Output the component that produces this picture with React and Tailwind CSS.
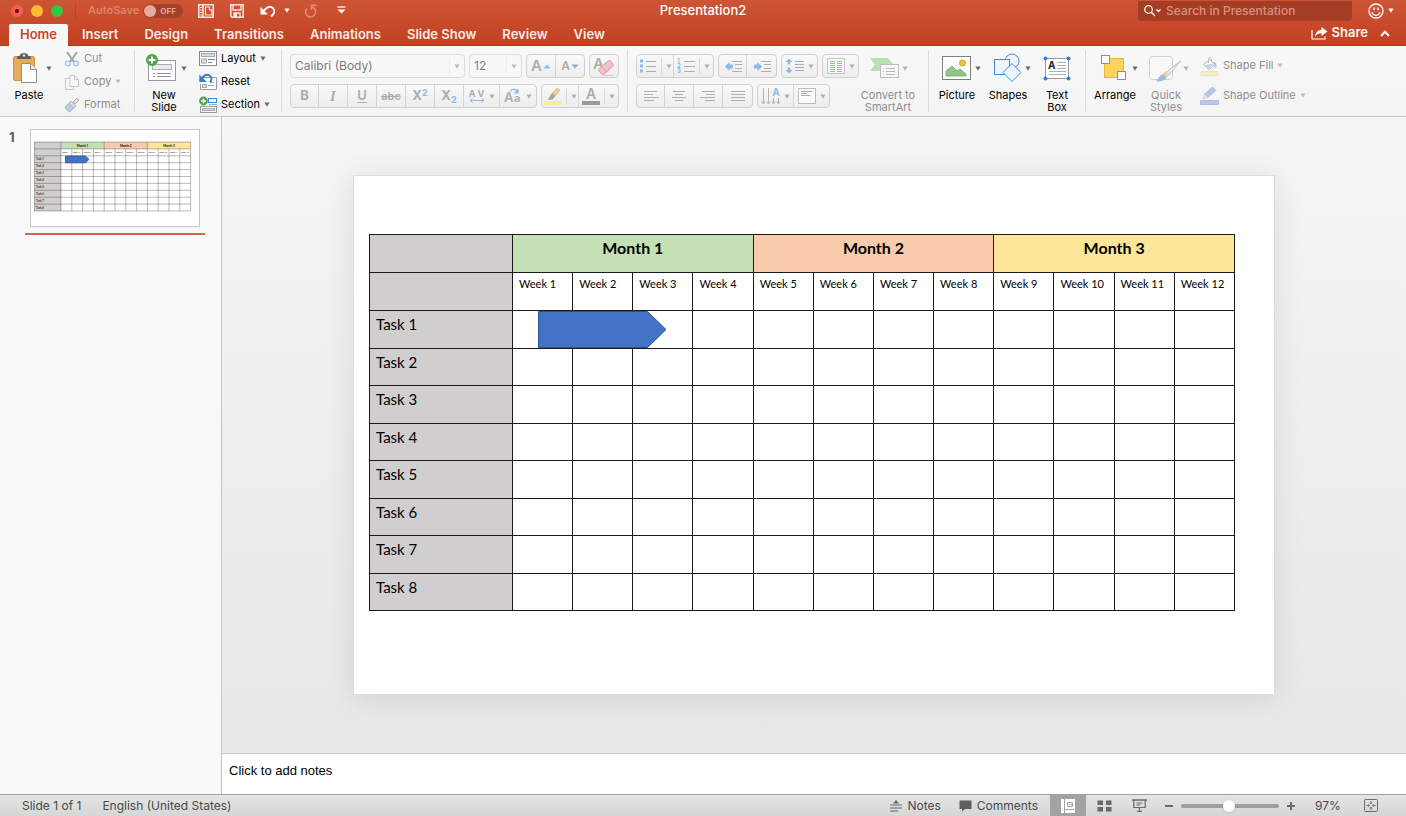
import { useState } from "react";

const tabs = ["Home", "Insert", "Design", "Transitions", "Animations", "Slide Show", "Review", "View"];

const months = [
  { name: "Month 1", cell: "bg-[#c5e0b4]", fill: "#c5e0b4" },
  { name: "Month 2", cell: "bg-[#f8cbad]", fill: "#f8cbad" },
  { name: "Month 3", cell: "bg-[#fde699]", fill: "#fde699" },
];
const weeks = Array.from({ length: 12 }, (_, i) => i + 1);
const tasks = Array.from({ length: 8 }, (_, i) => i + 1);

const Caret = ({ className = "text-[#6b6b6b]" }) => (
  <svg viewBox="0 0 6 5" className={`h-[5px] w-[6px] shrink-0 ${className}`} fill="currentColor" aria-hidden="true">
    <path d="M.4.4h5.2L3 4.8z" />
  </svg>
);

// small svg wrapper, lines are thin grey strokes unless told otherwise
const Svg = ({ w, h, className = "", children }) => (
  <svg width={w} height={h} viewBox={`0 0 ${w} ${h}`} className={`shrink-0 overflow-visible ${className}`} fill="none" stroke="#8a8a8a" aria-hidden="true">
    {children}
  </svg>
);

const Lines = ({ d, color = "#adadad" }) => <path d={d} stroke={color} strokeWidth="1" />;

const BigButton = ({ icon, label, width, caret = true, caretInside, disabled }) => {
  const arrow = <Caret className={disabled ? "text-[#b4b4b4]" : "text-[#6b6b6b]"} />;

  return (
    <button className={`flex items-start pt-1 text-[11px] leading-3 ${disabled ? "text-[#8e8e8e]" : "text-black"}`} disabled={disabled}>
      <span className={`flex flex-col items-center ${width}`}>
        <span className="flex h-9 items-center justify-center">
          {icon}
          {caretInside && arrow}
        </span>
        <span className="pt-[3px] text-center whitespace-pre">{label}</span>
      </span>
      {caret && !caretInside && <span className="flex h-9 items-center">{arrow}</span>}
    </button>
  );
};

const SmallButton = ({ icon, label, caret, disabled }) => (
  <button className={`flex h-[23px] items-center gap-1 text-[11px] ${disabled ? "text-[#8e8e8e]" : "text-black"}`} disabled={disabled}>
    {icon}
    <span>{label}</span>
    {caret && <Caret className={disabled ? "text-[#c0c0c0]" : "text-[#6b6b6b]"} />}
  </button>
);

const ToolBox = ({ children }) => (
  <div className="flex h-6 divide-x divide-[#d4d4d4] rounded border border-[#d0d0d0] bg-linear-to-b from-[#f9f9f9] to-[#ededed]">
    {children}
  </div>
);

const Tool = ({ label, width = "w-[29px]", caret, split, children }) => (
  <button aria-label={label} className={`flex items-center justify-center gap-1 text-[#adadad] ${width}`} disabled>
    {children}
    {split && <span className="h-4 w-px bg-[#d8d8d8]" />}
    {caret && <Caret className="text-[#b0b0b0]" />}
  </button>
);

const Divider = () => <div className="mx-2 h-[62px] w-px shrink-0 self-center bg-[#dcdcdc]" />;

const TitleBar = () => (
  <div className="flex h-[21px] items-center text-white">
    <div className="flex flex-1 items-center">
      <div className="flex gap-2 pl-[11px]">
        <button aria-label="Close" className="flex h-3 w-3 items-center justify-center rounded-full bg-[#fc5b53]">
          <span className="h-1 w-1 rounded-full bg-[#5a0a05]" />
        </button>
        <button aria-label="Minimize" className="h-3 w-3 rounded-full bg-[#fdbc2e]" />
        <button aria-label="Zoom" className="h-3 w-3 rounded-full bg-[#34c63f]" />
      </div>
      <span className="ml-3 h-4 w-px bg-[#b8472a]" />
      <label className="ml-3 flex items-center gap-1 text-[11px] font-semibold text-[#e0826a]">
        AutoSave
        <span className="flex h-[14px] w-10 items-center gap-1 rounded-full bg-[#a34129] px-px text-[8px] font-bold text-[#e5a191]">
          <input type="checkbox" className="h-3 w-3 appearance-none rounded-full bg-[#e8aa9c]" />
          OFF
        </span>
      </label>
      <div className="ml-[15px] flex items-center">
        <button aria-label="Templates">
          <Svg w={16} h={14}>
            <path d="M.8.8h14.4v12.4H.8zM5 1v12" stroke="#fbe9e4" strokeWidth="1.5" />
            <path d="M2 3.5h2M2 6h2M2 8.5h2M2 11h2" stroke="#fbe9e4" />
            <path d="M7.500 3h4v3H14v5H7.500z" stroke="#fbe9e4" strokeWidth="1.200" />
          </Svg>
        </button>
        <button aria-label="Save" className="ml-4">
          <Svg w={14} h={14}>
            <path d="M.8.8h12.400v12.400H2L.8 12z" stroke="#fbe9e4" strokeWidth="1.500" />
            <path d="M3 1v5h8V1M4 13.500V9h6v4.500" stroke="#fbe9e4" strokeWidth="1.300" />
            <path d="M4 9h3v4H4z" fill="#fbe9e4" stroke="none" />
          </Svg>
        </button>
        <button aria-label="Undo" className="ml-4">
          <Svg w={16} h={14}>
            <path d="M2 8.500 5.500 5C8 2.500 11 2.200 13 4.200s1.500 4.800-.5 6.800L11 12.500" stroke="#fff" strokeWidth="1.900" />
            <path d="M.5 3v7.500H8z" fill="#fff" stroke="none" />
          </Svg>
        </button>
        <Caret className="ml-2 text-white" />
        <button aria-label="Redo" className="ml-[14px]">
          <Svg w={13} h={14}>
            <path d="M2.800 4.500A5 5 0 1 0 10.500 4.700L8 2" stroke="#e08a74" strokeWidth="1.700" />
            <path d="M12.500 1.200H7.500V6" stroke="#e08a74" strokeWidth="1.600" />
          </Svg>
        </button>
        <button aria-label="Customize toolbar" className="ml-5">
          <Svg w={9} h={9}>
            <path d="M.5 1h8" stroke="#fff" strokeWidth="1.300" />
            <path d="M.5 3.500h8l-4 4z" fill="#fff" stroke="none" />
          </Svg>
        </button>
      </div>
    </div>
    <h1 className="text-[13px] font-medium">Presentation2</h1>
    <div className="flex flex-1 items-center justify-end">
      <label className="flex h-5 w-[214px] items-center self-start rounded-b bg-[#a53d24] pl-[6px]">
        <Svg w={18} h={12}>
          <circle cx="4.500" cy="4.500" r="3.800" stroke="#fff" strokeWidth="1.200" />
          <path d="m7.300 7.300 3.700 3.700" stroke="#fff" strokeWidth="1.300" />
          <path d="m12.500 4.500 2 2 2-2" stroke="#fff" strokeWidth="1.300" />
        </Svg>
        <input
          type="search"
          aria-label="Search in Presentation"
          placeholder="Search in Presentation"
          className="ml-1 min-w-0 flex-1 bg-transparent text-[12px] font-medium outline-none placeholder:text-[#dc907c]"
        />
      </label>
      <button aria-label="Feedback" className="mr-3 ml-4 flex items-center gap-1">
        <Svg w={16} h={16}>
          <circle cx="8" cy="8" r="7" stroke="#fff" strokeWidth="1.300" />
          <path d="M6 4.500v2.700M10 4.500v2.700" stroke="#fff" strokeWidth="1.500" />
          <path d="M4 9c.6 2.200 2 3.300 4 3.300S11.400 11.200 12 9" stroke="#fff" strokeWidth="1.200" />
        </Svg>
        <Caret className="text-white" />
      </button>
    </div>
  </div>
);

const Tabs = ({ active, onSelect }) => (
  <div className="flex h-6 items-end pr-4 pl-[9px]">
    <nav className="-mb-px flex">
      {tabs.map((tab) => (
        <button
          key={tab}
          onClick={() => onSelect(tab)}
          className={`h-[22px] rounded-t-xs text-[13px] font-semibold ${
            active === tab ? "mr-px bg-[#f8f8f8] px-[11px] text-[#c9472a]" : "px-[13px] text-[#fbe9e4]"
          }`}
        >
          {tab}
        </button>
      ))}
    </nav>
    <div className="ml-auto flex h-6 items-center text-[13px] font-semibold text-[#fdf0ec]">
      <button className="flex items-center gap-1">
        <Svg w={17} h={14}>
          <path d="M1 4v9h13v-2.500" stroke="#fff" strokeWidth="1.200" />
          <path d="M10.500 1 16.500 5.500l-6 4.500V7.300C7.500 7.300 5.500 8.300 4 11c.3-4 2.500-7 6.500-7.300z" fill="#fff" stroke="none" />
        </Svg>
        Share
      </button>
      <button aria-label="Collapse ribbon" className="ml-3">
        <Svg w={10} h={7}>
          <path d="m1 6 4-4.200L9 6" stroke="#fff" strokeWidth="2" />
        </Svg>
      </button>
    </div>
  </div>
);

const ClipboardGroup = () => (
  <div className="flex items-start">
    <BigButton
      width="w-[34px]"
      label="Paste"
      icon={
        <Svg w={34} h={32}>
          <rect x="1.500" y="4.500" width="21" height="24" rx="1.500" fill="#e2ab5f" stroke="#cf9445" />
          <path d="M5 7V5.500C5 4.500 6 4 7.500 4 8 2 10 1 12 1s4 1 4.500 3c1.500 0 2.500.5 2.500 1.500V7z" fill="#5f5f5f" stroke="none" />
          <circle cx="12" cy="3.500" r="1.200" fill="#e8e8e8" stroke="none" />
          <path d="M9.500 11.500h9l6 6v13h-15z" fill="#fff" stroke="#8f8f8f" />
          <path d="M18.500 11.500v6h6" fill="#f1f1f1" />
        </Svg>
      }
    />
    <div className="ml-3 flex flex-col pt-px">
      <SmallButton
        disabled
        label="Cut"
        icon={
          <Svg w={16} h={16}>
            <path d="M3 1l7 10M13 1 6 11" stroke="#a3a3a3" strokeWidth="2" />
            <circle cx="3.800" cy="12.500" r="2.400" stroke="#9dbfe6" strokeWidth="1.200" />
            <circle cx="12" cy="12.500" r="2.400" stroke="#9dbfe6" strokeWidth="1.200" />
          </Svg>
        }
      />
      <SmallButton
        disabled
        caret
        label="Copy"
        icon={
          <Svg w={16} h={16}>
            <path d="M6 4.500H1.500v11h8V12" stroke="#c6c6c6" />
            <path d="M6 1.500h4.500l4 4v7H6z" fill="#fafafa" stroke="#c6c6c6" />
            <path d="M10.500 1.500v4h4" stroke="#c6c6c6" />
          </Svg>
        }
      />
      <SmallButton
        disabled
        label="Format"
        icon={
          <Svg w={16} h={16}>
            <path d="m1 10 4-4 5 5-4 4c-1-.2-2-.8-2.700-1.500C2.300 12.500 1.300 11 1 10z" fill="#b8cce6" stroke="#a8bbd4" />
            <path d="m5 6 2-2 5 5-2 2z" fill="#dedede" stroke="#b5b5b5" />
            <path d="m9 5 4-4 2 2-4 4z" fill="#dedede" stroke="#b5b5b5" />
          </Svg>
        }
      />
    </div>
  </div>
);

const SlidesGroup = () => (
  <div className="flex items-start pl-1">
    <BigButton
      width="w-[34px]"
      label={"New\nSlide"}
      icon={
        <Svg w={34} h={32}>
          <rect x="1.500" y="8.500" width="27" height="20" fill="#fff" stroke="#9a9a9a" />
          <rect x="5.500" y="12.500" width="19" height="5" fill="#e9ebef" stroke="#a9adb5" />
          <path d="M6 21.500h2M10 21.500h14M6 24.500h2M10 24.500h14" stroke="#8c919c" />
          <circle cx="5" cy="8" r="6" fill="#4fa64a" stroke="none" />
          <path d="M5 4.500v7M1.500 8h7" stroke="#fff" strokeWidth="2" />
        </Svg>
      }
    />
    <div className="ml-3 flex flex-col pt-px">
      <SmallButton
        caret
        label="Layout"
        icon={
          <Svg w={18} h={15}>
            <rect x=".5" y=".5" width="17" height="14" fill="#fff" stroke="#8a8a8a" />
            <rect x="2.500" y="2.500" width="13" height="3" fill="#d9dce1" stroke="#a5a9b0" />
            <rect x="2.500" y="8" width="5" height="4" fill="#d9dce1" stroke="#a5a9b0" />
            <path d="M9 8.500h7M9 11.500h4" />
          </Svg>
        }
      />
      <SmallButton
        label="Reset"
        icon={
          <Svg w={18} h={17}>
            <path d="M5 4.500h12.500v12h-16V11" fill="#fff" stroke="#9a9a9a" />
            <rect x="3.500" y="11.500" width="4" height="3" fill="#d9dce1" stroke="#a5a9b0" />
            <path d="M9 12.500h6M12 9.500h3" stroke="#a5a9b0" />
            <path d="M3 5.500C5 2.500 8 1 10.500 2.500s2.500 4.500.5 7" stroke="#2f7fd8" strokeWidth="2" />
            <path d="M.3 1.500v7.500h7.500z" fill="#2f7fd8" stroke="none" />
          </Svg>
        }
      />
      <SmallButton
        caret
        label="Section"
        icon={
          <Svg w={18} h={17}>
            <rect x="9.500" y="2.500" width="8" height="4" fill="#fff" stroke="#3f86d4" />
            <rect x="1.500" y="10.500" width="16" height="6" fill="#fff" stroke="#9a9a9a" />
            <rect x="3.500" y="12.500" width="12" height="2" fill="#d9dce1" stroke="#a5a9b0" />
            <path d="M10 8.500h8" stroke="#8ab1dc" />
            <circle cx="4.500" cy="5" r="4.400" fill="#4fa64a" stroke="none" />
            <path d="M4.500 2.500v5M2 5h5" stroke="#fff" strokeWidth="1.500" />
          </Svg>
        }
      />
    </div>
  </div>
);

const Picker = ({ label, value, width }) => (
  <div className={`flex h-6 items-center rounded border border-[#dcdcdc] bg-[#f8f8f8] ${width}`}>
    <select aria-label={label} className="h-full min-w-0 flex-1 appearance-none bg-transparent pl-1 text-[12px] text-[#7c7c7c] outline-none">
      <option>{value}</option>
    </select>
    <span className="h-4 w-px bg-[#ececec]" />
    <Caret className="mx-1 text-[#b9b9b9]" />
  </div>
);

const FontGroup = () => (
  <div className="flex flex-col gap-[6px] pt-2">
    <div className="flex gap-1">
      <Picker label="Font" value="Calibri (Body)" width="w-[175px]" />
      <Picker label="Font size" value="12" width="w-[53px]" />
      <ToolBox>
        <Tool label="Increase font size">
          <span className="flex items-center gap-px">
            <span className="text-[15px] font-semibold">A</span>
            <Svg w={8} h={5}><path d="m.5 4.500 3.500-4 3.500 4z" fill="#8fb9ea" stroke="none" /></Svg>
          </span>
        </Tool>
        <Tool label="Decrease font size" width="w-7">
          <span className="flex items-center gap-px">
            <span className="text-[12px] font-semibold">A</span>
            <Svg w={8} h={5}><path d="m.5.5 3.500 4 3.500-4z" fill="#8fa9da" stroke="none" /></Svg>
          </span>
        </Tool>
      </ToolBox>
      <ToolBox>
        <Tool label="Clear formatting" width="w-7">
          <Svg w={22} h={20}>
            <text x="0" y="13" fontSize="15" fontWeight="600" fill="#adadad" stroke="none">A</text>
            <rect x="5.500" y="8" width="15" height="7" rx="1.500" transform="rotate(-42 13 11.500)" fill="#f0c4c8" stroke="#dba2a8" />
            <path d="m8.500 10.500 5 5.300" stroke="#dba2a8" />
            <path d="M11 19.500h9" stroke="#cfcfcf" />
          </Svg>
        </Tool>
      </ToolBox>
    </div>
    <div className="flex gap-1">
      <ToolBox>
        <Tool label="Bold" width="w-[28px]"><b className="text-[13px]">B</b></Tool>
        <Tool label="Italic"><i className="font-['Liberation_Serif',serif] text-[15px] font-bold">I</i></Tool>
        <Tool label="Underline"><span className="text-[13px] font-semibold underline underline-offset-2">U</span></Tool>
        <Tool label="Strikethrough"><span className="text-[11px] font-semibold line-through">abc</span></Tool>
        <Tool label="Superscript">
          <span className="text-[13px] font-bold">X<sup className="text-[9px] text-[#8fb9ea]">2</sup></span>
        </Tool>
        <Tool label="Subscript">
          <span className="text-[13px] font-bold">X<sub className="text-[9px] text-[#8fb9ea]">2</sub></span>
        </Tool>
        <Tool label="Character spacing" width="w-9" caret>
          <span className="flex flex-col items-center text-[9px] leading-[9px] font-bold">
            A V
            <Svg w={16} h={5}>
              <path d="M1 2.500h14M3.500.5l-2.500 2 2.500 2M12.500.5l2.500 2-2.500 2" stroke="#8fb9ea" />
            </Svg>
          </span>
        </Tool>
        <Tool label="Change case" width="w-9" caret>
          <Svg w={18} h={16}>
            <text x="0" y="14" fontSize="13" fontWeight="600" fill="#adadad" stroke="none">A</text>
            <text x="10" y="14" fontSize="11" fontWeight="600" fill="#adadad" stroke="none">a</text>
            <path d="M6.500 3.500c1-2.500 4.500-3 6.500-.5" stroke="#8fb9ea" strokeWidth="1.500" />
            <path d="M14.500.5v5h-5z" fill="#8fb9ea" stroke="none" />
          </Svg>
        </Tool>
      </ToolBox>
      <ToolBox>
        <Tool label="Highlight" width="w-[37px]" caret split>
          <Svg w={18} h={18}>
            <path d="m8 6 5-5 3 2-4.500 6z" fill="#f0cf96" stroke="#dcb980" strokeWidth=".7" />
            <path d="m8 6 3.500 3-3 3.500-5 .5z" fill="#a5a5a5" stroke="none" />
            <path d="M0 14h18v4H0z" fill="#f0f0a0" stroke="none" />
          </Svg>
        </Tool>
        <Tool label="Font color" width="w-[39px]" caret split>
          <Svg w={18} h={18}>
            <text x="9" y="11.500" fontSize="14" fontWeight="600" textAnchor="middle" fill="#adadad" stroke="none">A</text>
            <path d="M0 14h18v4H0z" fill="#9a9a9a" stroke="none" />
          </Svg>
        </Tool>
      </ToolBox>
    </div>
  </div>
);

const ParagraphGroup = () => (
  <div className="flex items-start">
    <div className="flex flex-col gap-[6px] pt-2">
      <div className="flex gap-1">
        <ToolBox>
          <Tool label="Bullets" width="w-[37px]" caret split>
            <Svg w={18} h={14}>
              <path d="M1 2h3M1 7h3M1 12h3" stroke="#8fb9ea" strokeWidth="3" />
              <Lines d="M7 2.500h10M7 7.500h10M7 12.500h10" />
            </Svg>
          </Tool>
          <Tool label="Numbering" width="w-[39px]" caret split>
            <Svg w={18} h={16}>
              <g fill="#8fb9ea" stroke="none" fontSize="6" fontWeight="700">
                <text x="0" y="5">1</text>
                <text x="0" y="10">2</text>
                <text x="0" y="15">3</text>
              </g>
              <Lines d="M7 3.500h11M7 8.500h11M7 13.500h11" />
            </Svg>
          </Tool>
        </ToolBox>
        <ToolBox>
          <Tool label="Decrease indent" width="w-[28px]">
            <Svg w={18} h={14}>
              <path d="M1 7.500 5.500 3v2.500H9v4H5.500V12z" fill="#8fb9ea" stroke="none" />
              <Lines d="M8 2.500h10M11 5.500h7M11 9.500h7M8 12.500h10" />
            </Svg>
          </Tool>
          <Tool label="Increase indent" width="w-[29px]">
            <Svg w={18} h={14}>
              <path d="M9 7.500 4.500 3v2.500H1v4h3.500V12z" fill="#8fb9ea" stroke="none" />
              <Lines d="M8 2.500h10M11 5.500h7M11 9.500h7M8 12.500h10" />
            </Svg>
          </Tool>
        </ToolBox>
        <ToolBox>
          <Tool label="Line spacing" width="w-[35px]" caret>
            <Svg w={19} h={16}>
              <path d="M4 .5 7.500 4H5.200v2.500H2.800V4H.5zM4 15.500 7.500 12H5.200V9.500H2.800V12H.5z" fill="#8fb9ea" stroke="none" />
              <Lines d="M10 3.500h9M10 6.500h9M10 9.500h9M10 12.500h9" />
            </Svg>
          </Tool>
        </ToolBox>
        <ToolBox>
          <Tool label="Columns" width="w-[35px]" caret>
            <Svg w={18} h={16}>
              <rect x=".5" y=".5" width="17" height="15" fill="#fafafa" stroke="#c4c4c4" />
              <Lines color="#8ccb85" d="M3 3.500h5M3 5.500h5M3 7.500h5M3 9.500h5M3 11.500h5M3 13.500h5M10 3.500h5M10 5.500h5M10 7.500h5M10 9.500h5M10 11.500h5M10 13.500h5" />
            </Svg>
          </Tool>
        </ToolBox>
      </div>
      <div className="flex gap-1">
        <ToolBox>
          <Tool label="Align left" width="w-[28px]"><Svg w={16} h={12}><Lines d="M1 1.500h13M1 4.500h9M1 7.500h15M1 10.500h10" /></Svg></Tool>
          <Tool label="Align center"><Svg w={16} h={12}><Lines d="M2 1.500h12M4 4.500h8M1 7.500h14M4 10.500h8" /></Svg></Tool>
          <Tool label="Align right"><Svg w={16} h={12}><Lines d="M2 1.500h13M6 4.500h9M0 7.500h15M5 10.500h10" /></Svg></Tool>
          <Tool label="Justify"><Svg w={16} h={12}><Lines d="M1 1.500h14M1 4.500h14M1 7.500h14M1 10.500h14" /></Svg></Tool>
        </ToolBox>
        <ToolBox>
          <Tool label="Text direction" width="w-[36px]" caret>
            <Svg w={18} h={17}>
              <path d="M1.500 0v15M6.500 0v15M11.500 10v5M16.500 10v5M0 13.500 1.500 16 3 13.500M5 13.500 6.500 16 8 13.500M10 13.500l1.500 2.500 1.500-2.500M15 13.500l1.500 2.500 1.500-2.500" stroke="#b4b4b4" />
              <text x="14" y="8" fontSize="10" fontWeight="700" textAnchor="middle" fill="#8fb9ea" stroke="none">A</text>
            </Svg>
          </Tool>
          <Tool label="Align text" width="w-[35px]" caret>
            <Svg w={18} h={16}>
              <rect x=".5" y=".5" width="17" height="15" fill="#fafafa" stroke="#bdbdbd" />
              <Lines d="M3 3.500h11M3 5.500h6M3 7.500h9" />
            </Svg>
          </Tool>
        </ToolBox>
      </div>
    </div>
    <BigButton
      disabled
      caretInside
      width="w-[58px]"
      label={"Convert to\nSmartArt"}
      icon={
        <Svg w={34} h={32}>
          <path d="M2 6h18l6 7-5 6H2l5-6.500z" fill="#bcdfba" stroke="none" />
          <rect x="12.500" y="12.500" width="18" height="13" fill="#fafafa" stroke="#bdbdbd" />
          <Lines d="M15 16.500h1M18 16.500h9M15 19.500h1M18 19.500h9M15 22.500h1M18 22.500h9" color="#b5b5b5" />
        </Svg>
      }
    />
  </div>
);

const InsertGroup = () => (
  <div className="flex items-start gap-[10px] pr-1 pl-[2px]">
    <BigButton
      width="w-9"
      label="Picture"
      icon={
        <Svg w={30} h={26}>
          <rect x=".5" y="1.500" width="28" height="23" fill="#fff" stroke="#7f7f7f" />
          <path d="M4 21v-5l6-5 5 5 3-2 6 5v2z" fill="#94c48e" stroke="#7db577" />
          <circle cx="20.500" cy="8" r="3" fill="#f5bf3a" stroke="#e0a526" />
        </Svg>
      }
    />
    <BigButton
      width="w-[34px]"
      label="Shapes"
      icon={
        <Svg w={30} h={30}>
          <circle cx="19" cy="8" r="7" fill="#eef5fd" stroke="#3d8ae0" />
          <rect x="1.500" y="6.500" width="15" height="15" fill="#eef5fd" stroke="#3d8ae0" />
          <path d="m19 10.500 9 9-9 9-9-9z" fill="#eef5fd" stroke="#3d8ae0" />
        </Svg>
      }
    />
    <BigButton
      width="w-8"
      label={"Text\nBox"}
      caret={false}
      icon={
        <Svg w={28} h={26}>
          <rect x="2.500" y="3.500" width="23" height="20" fill="#fff" stroke="#9a9a9a" />
          <text x="5" y="14" fontSize="10" fontWeight="700" fill="#222" stroke="none">A</text>
          <path d="M14 7.500h9M14 10.500h9M14 13.500h9M6 16.500h17M6 19.500h17" stroke="#b0b0b0" />
          <g fill="#2f7fd8" stroke="none">
            <circle cx="2.500" cy="3.500" r="2" />
            <circle cx="25.500" cy="3.500" r="2" />
            <circle cx="2.500" cy="23.500" r="2" />
            <circle cx="25.500" cy="23.500" r="2" />
          </g>
        </Svg>
      }
    />
  </div>
);

const DrawingGroup = () => (
  <div className="flex items-start gap-[11px] pl-1">
    <BigButton
      width="w-[34px]"
      label="Arrange"
      icon={
        <Svg w={28} h={28}>
          <rect x="3.500" y="4.500" width="19" height="19" fill="#fcd456" stroke="#e8b935" />
          <rect x=".5" y="1.500" width="8" height="8" fill="#fff" stroke="#8f8f8f" />
          <rect x="16.500" y="17.500" width="8" height="8" fill="#fff" stroke="#8f8f8f" />
        </Svg>
      }
    />
    <BigButton
      disabled
      width="w-[34px]"
      label={"Quick\nStyles"}
      icon={
        <Svg w={34} h={28}>
          <rect x=".5" y="2.500" width="23" height="23" rx="3" fill="#f9f9f9" stroke="#cfcfcf" />
          <path d="M31.500 7 20 21l-3-2.500z" fill="#ededed" stroke="#bdbdbd" />
          <path d="m16 17 4 4-3 3-3.500-3z" fill="#f2d3a8" stroke="none" />
          <path d="M13.500 20.500c2 0 4 2 4 3.500-2 3-7 4-10.500 3 2.500-1 2.500-5.500 6.500-6.500z" fill="#9dbbe3" stroke="none" />
        </Svg>
      }
    />
    <div className="flex flex-col gap-[7px] pt-2">
      <SmallButton
        disabled
        caret
        label="Shape Fill"
        icon={
          <Svg w={19} h={20}>
            <path d="M1 15.500h17v4H1z" fill="#f7eecb" stroke="#efe3b4" />
            <path d="m3.500 8.500 6-5 5.500 5-6 5z" fill="#fafafa" stroke="#b9b9b9" />
            <path d="M8.500 7V3c0-2 3-2 3 0v3" stroke="#b9b9b9" />
            <path d="m5 9 9-1.500L9 13z" fill="#bcd6ef" stroke="none" />
            <path d="M13.500 5.500c3 .5 3.500 3.500 2.500 7-1.500-1-1.500-3-2.500-4.500z" fill="#a9cbec" stroke="none" />
          </Svg>
        }
      />
      <SmallButton
        disabled
        caret
        label="Shape Outline"
        icon={
          <Svg w={19} h={20}>
            <path d="M.5 14.500h18v4H.5z" fill="#b9cae6" stroke="#abc0e0" />
            <path d="m3 12.500 1.500-4.500 8-7 3.500 3.500-8 7z" fill="#b2c8e6" stroke="#a8bcd8" strokeWidth=".7" />
            <path d="M3 12.500 4.500 8l3.500 3.500z" fill="#e3e3e3" stroke="none" />
          </Svg>
        }
      />
    </div>
  </div>
);

const Ribbon = () => (
  <div className="flex h-[72px] shrink-0 items-start overflow-hidden border-t border-b border-t-[#a9381c] border-b-[#c8c8c8] bg-linear-to-b from-[#f8f8f8] to-[#f4f4f4] pl-3 [&>*]:shrink-0">
    <div className="w-[114px]"><ClipboardGroup /></div>
    <Divider />
    <div className="w-[130px]"><SlidesGroup /></div>
    <Divider />
    <FontGroup />
    <Divider />
    <div className="w-[284px]"><ParagraphGroup /></div>
    <Divider />
    <InsertGroup />
    <Divider />
    <DrawingGroup />
  </div>
);

// thumbnail shown in the slide list
const Thumbnail = () => {
  const row = (i) => 12 + i * 6.9;
  const col = (i) => 30 + i * 10.8;
  return (
    <svg viewBox="0 0 168 96" className="block w-full bg-white" fontFamily="Lato, sans-serif">
      <path d="M3.500 12H30v69H3.500z" fill="#d0cece" />
      {months.map((m, i) => (
        <g key={m.name}>
          <rect x={col(i * 4)} y="12" width="43.200" height="6.900" fill={m.fill} />
          <text x={col(i * 4 + 2)} y="16.500" fontSize="3" fontWeight="700" textAnchor="middle">{m.name}</text>
        </g>
      ))}
      {weeks.map((w) => (
        <text key={w} x={col(w - 1) + 1} y="22.500" fontSize="2">Week {w}</text>
      ))}
      {tasks.map((t) => (
        <text key={t} x="5" y={row(t + 1) + 4.5} fontSize="2.800" fontWeight="700" fill="#333">Task {t}</text>
      ))}
      <g stroke="#000" strokeOpacity=".35" strokeWidth=".8">
        {Array.from({ length: 11 }, (_, i) => (
          <path key={i} d={`M3.500 ${row(i)}H159.600`} />
        ))}
        <path d="M3.500 12v69" />
        {Array.from({ length: 13 }, (_, i) => (
          <path key={i} d={`M${col(i)} ${i % 4 ? 18.9 : 12}V81`} />
        ))}
      </g>
      <path d="M34.500 26h20l3.500 3.400-3.500 3.400h-20z" fill="#4472c4" stroke="#2f528f" strokeWidth=".8" />
    </svg>
  );
};

const GanttTable = () => (
  <table className="h-[377px] w-full table-fixed border-collapse text-left font-[Lato,sans-serif] text-black [&_td]:border [&_td]:border-[#1a1a1a] [&_th]:border [&_th]:border-[#1a1a1a]">
    <colgroup>
      <col className="w-[143px]" />
      {weeks.map((w) => (
        <col key={w} />
      ))}
    </colgroup>
    <thead>
      <tr className="h-[38px]">
        <td className="bg-[#d0cece]" />
        {months.map((m) => (
          <th key={m.name} colSpan={4} className={`pt-[3px] text-center align-top text-[16px] leading-5 font-bold ${m.cell}`}>
            {m.name}
          </th>
        ))}
      </tr>
      <tr className="h-[38px]">
        <td className="bg-[#d0cece]" />
        {weeks.map((w) => (
          <th key={w} className="pt-[3px] pl-[6px] align-top text-[11px] leading-4 font-normal whitespace-nowrap">
            Week {w}
          </th>
        ))}
      </tr>
    </thead>
    <tbody>
      {tasks.map((t) => (
        <tr key={t}>
          <th className="bg-[#d0cece] pt-[3px] pl-[6px] align-top text-[15px] leading-5 font-normal">Task {t}</th>
          {weeks.map((w) => (
            <td key={w} className="relative">
              {t === 1 && w === 1 && (
                <svg width="129" height="37" viewBox="0 0 129 37" className="absolute top-0 left-[25px] z-10 max-w-none" aria-hidden="true">
                  <path d="M.5.5h109L128 18.500l-18.500 18H.5z" fill="#4472c4" stroke="#2f528f" />
                </svg>
              )}
            </td>
          ))}
        </tr>
      ))}
    </tbody>
  </table>
);

const StatusBar = () => {
  const [zoom, setZoom] = useState(97);

  return (
    <footer className="flex h-[22px] shrink-0 items-center border-t border-[#a0a0a0] bg-linear-to-b from-[#e4e4e4] to-[#d6d6d6] pr-7 pl-[22px] text-[12px] text-[#4a4a4a]">
      <span>Slide 1 of 1</span>
      <button className="ml-[21px]">English (United States)</button>
      <div className="ml-auto flex h-full items-center">
        <button className="flex items-center gap-1">
          <Svg w={14} h={12}>
            <path d="m7 0 3 3.500H4z" fill="#6a6a6a" stroke="none" />
            <path d="M1 5h12M1 8h12M1 11h8" stroke="#6a6a6a" />
          </Svg>
          Notes
        </button>
        <button className="ml-[18px] flex items-center gap-[5px]">
          <Svg w={13} h={12}>
            <path d="M.5.500h12v8.500H6L3 11.800V9H.5z" fill="#5f5f5f" stroke="none" />
          </Svg>
          Comments
        </button>
        <button aria-label="Normal view" className="ml-3 flex h-full w-9 items-center justify-center bg-[#a3a3a3]">
          <Svg w={14} h={14}>
            <path d="M0 0h14v14H0z" fill="#fff" stroke="none" />
            <path d="M3.500 0v14M4 10.500h9" stroke="#a3a3a3" />
            <path d="M6.500 3.500h5v4h-5zM8 5.500h3" stroke="#a3a3a3" />
          </Svg>
        </button>
        <button aria-label="Slide sorter" className="ml-[11px]">
          <Svg w={15} h={12}>
            <path d="M.5.5H6v4.500H.5zM9 .5h5.500v4.500H9zM.5 7H6v4.500H.5zM9 7h5.500v4.500H9z" fill="#686868" stroke="none" />
          </Svg>
        </button>
        <button aria-label="Slide show" className="ml-5">
          <Svg w={15} h={13}>
            <path d="M0 1h15" stroke="#6a6a6a" strokeWidth="1.500" />
            <path d="M1.800 1v7.500h11.400V1M4.500 4h6M4.500 6h4M7.500 8.500V12M5 12.300h5" stroke="#6a6a6a" strokeWidth="1.200" />
          </Svg>
        </button>
        <button aria-label="Zoom out" className="ml-[18px]">
          <Svg w={8} h={8}><path d="M0 4h8" stroke="#6a6a6a" strokeWidth="2" /></Svg>
        </button>
        <input
          type="range"
          aria-label="Zoom"
          min="0"
          max="200"
          value={zoom}
          onChange={(e) => setZoom(Number(e.target.value))}
          className="mx-2 w-[98px] appearance-none bg-transparent [&::-webkit-slider-runnable-track]:h-1 [&::-webkit-slider-runnable-track]:rounded-full [&::-webkit-slider-runnable-track]:bg-[#9e9e9e] [&::-webkit-slider-thumb]:-mt-1 [&::-webkit-slider-thumb]:h-3 [&::-webkit-slider-thumb]:w-3 [&::-webkit-slider-thumb]:appearance-none [&::-webkit-slider-thumb]:rounded-full [&::-webkit-slider-thumb]:bg-white [&::-webkit-slider-thumb]:shadow"
        />
        <button aria-label="Zoom in">
          <Svg w={8} h={8}><path d="M0 4h8M4 0v8" stroke="#6a6a6a" strokeWidth="2" /></Svg>
        </button>
        <button className="ml-5 w-[29px] text-left">{zoom}%</button>
        <button aria-label="Fit to window" className="ml-5">
          <Svg w={14} h={13}>
            <rect x=".5" y=".5" width="13" height="12" rx="1" stroke="#6a6a6a" />
            <path d="M7 2v3M7 8v3M2.500 6.500h3M8.500 6.500h3M6 3.500l1 1.500 1-1.500M6 9.500 7 8l1 1.500M4 5.500l1.500 1L4 7.500M10 5.500l-1.500 1 1.500 1" stroke="#6a6a6a" strokeWidth=".9" />
          </Svg>
        </button>
      </div>
    </footer>
  );
};

const App = () => {
  const [activeTab, setActiveTab] = useState("Home");

  return (
    <div className="flex h-screen flex-col overflow-hidden bg-white font-[Inter,sans-serif]">
      <header className="relative z-10 shrink-0 bg-linear-to-b from-[#cd5535] to-[#c24020]">
        <TitleBar />
        <Tabs active={activeTab} onSelect={setActiveTab} />
      </header>
      <Ribbon />

      <div className="flex min-h-0 flex-1">
        <aside className="w-[222px] shrink-0 border-r border-[#c6c6c6] bg-[#f9f9f9] pt-3 pr-4 pl-[9px]">
          <div className="flex">
            <span className="w-4 text-[13px] leading-4 font-bold text-[#5a5a5a]">1</span>
            <button aria-label="Slide 1" className="flex-1 border-b-2 border-[#d9634a] px-[5px] pb-[6px]">
              <span className="block border border-[#c6c6c6]">
                <Thumbnail />
              </span>
            </button>
          </div>
        </aside>

        <main className="flex min-w-0 flex-1 flex-col">
          <div className="flex min-h-0 flex-1 items-center justify-center bg-linear-to-b from-[#f5f5f5] to-[#e8e8e8]">
            <div className="aspect-[922/520] w-full max-w-[922px] border border-[#dcdcdc] bg-white pt-[58px] pr-[39px] pl-[15px] shadow-[0_4px_28px_rgba(0,0,0,0.10)]">
              <GanttTable />
            </div>
          </div>
          <div className="h-[41px] shrink-0 border-t border-[#c8c8c8] bg-white px-[7px] py-[7px] font-['Liberation_Sans',Arial,sans-serif] text-[13px] text-black">
            Click to add notes
          </div>
        </main>
      </div>

      <StatusBar />
    </div>
  );
};

export default App;
